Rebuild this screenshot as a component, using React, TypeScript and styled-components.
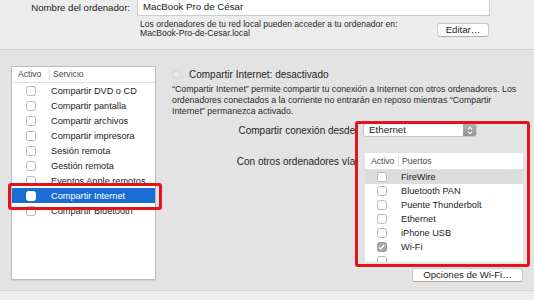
import styled, { createGlobalStyle } from "styled-components";

const GlobalStyle = createGlobalStyle`
  html,
  body {
    margin: 0;
    padding: 0;
    background: #ececec;
  }

  body {
    font-family: "Liberation Sans", Arial, sans-serif;
    color: #1f1f1f;
  }

  * {
    box-sizing: border-box;
  }
`;

const Window = styled.div`
  position: relative;
  width: 534px;
  height: 300px;
  overflow: hidden;
  background: #ececec;
`;

const NameSection = styled.section`
  height: 50px;
  margin-top: -1px;
  display: grid;
  grid-template-columns: 137px 353px;
  grid-template-rows: 17px auto;
  row-gap: 4px;
`;

const NameLabel = styled.div`
  text-align: right;
  padding-right: 7px;
  font-size: 9.6px;
  line-height: 17px;
  color: #222;
`;

const NameField = styled.div`
  height: 17px;
  background: #fff;
  border: 1px solid #cbcbcb;
  border-top: none;
  padding-left: 5px;
  font-size: 9.7px;
  line-height: 16px;
  color: #1a1a1a;
`;

const InfoRow = styled.div`
  grid-column: 2;
  display: flex;
  justify-content: space-between;
  align-items: flex-start;
`;

const InfoText = styled.div`
  padding-left: 3px;
  font-size: 8.6px;
  line-height: 9.3px;
  color: #2a2a2a;
`;

const PushButton = styled.button<{ $width: number }>`
  width: ${(p) => p.$width}px;
  height: 14px;
  padding: 0;
  background: #fff;
  border: 1px solid #c8c8c8;
  border-bottom-color: #adadad;
  border-radius: 3px;
  font-family: inherit;
  font-size: 9.6px;
  line-height: 12px;
  color: #1c1c1c;
`;

const EditButton = styled(PushButton)`
  margin-top: 3px;
  margin-right: 1px;
`;

const ServicesBox = styled.section`
  height: 242px;
  background: #e3e3e3;
  border-top: 1px solid #d6d6d6;
  border-bottom: 1px solid #d6d6d6;
  display: flex;
  padding: 16px 0 0 11px;
`;

const ListBox = styled.div`
  width: 145px;
  height: 214px;
  background: #fff;
  border: 1px solid #bcbcbc;
  box-shadow: 0 1px 1px rgba(0, 0, 0, 0.08);
  overflow: hidden;
`;

const ListHeader = styled.div<{ $first: number; $height: number }>`
  height: ${(p) => p.$height}px;
  display: grid;
  grid-template-columns: ${(p) => p.$first}px 1fr;
  align-items: center;
  border-bottom: 1px solid #e2e2e2;
  font-size: 8.6px;
  color: #4b4b4b;
`;

const HeaderCell = styled.div<{ $divider?: boolean }>`
  padding-left: ${(p) => (p.$divider ? 3 : 6)}px;
  border-left: ${(p) => (p.$divider ? "1px solid #dedede" : "none")};
  line-height: 11px;
`;

const ListRow = styled.div<{ $first: number; $height: number; $tone?: "selected" | "hover" }>`
  height: ${(p) => p.$height}px;
  display: grid;
  grid-template-columns: ${(p) => p.$first}px 1fr;
  align-items: center;
  font-size: 9.2px;
  color: ${(p) => (p.$tone === "selected" ? "#fff" : "#1c1c1c")};
  background: ${(p) =>
    p.$tone === "selected" ? "#1b6dd6" : p.$tone === "hover" ? "#dcdcdc" : "transparent"};
`;

const CheckCell = styled.div`
  display: flex;
  justify-content: center;
`;

const Check = styled.span<{ $checked?: boolean; $onDark?: boolean }>`
  width: 10px;
  height: 10px;
  border-radius: 2.5px;
  display: flex;
  align-items: center;
  justify-content: center;
  background: ${(p) => (p.$checked ? "#a6a6a6" : "#fff")};
  border: 1px solid ${(p) => (p.$checked ? "#999" : p.$onDark ? "#fff" : "#b9b9b9")};
`;

const RowLabel = styled.div<{ $pad: number }>`
  padding-left: ${(p) => p.$pad}px;
  white-space: nowrap;
`;

const RightPanel = styled.div`
  margin-left: 16px;
  width: 351px;
  padding-top: 1px;
`;

const StatusRow = styled.div`
  height: 14px;
  display: flex;
  align-items: center;
  gap: 8px;
  font-size: 10px;
  color: #1e1e1e;
`;

const Radio = styled.span`
  width: 9px;
  height: 9px;
  border-radius: 50%;
  background: #e9e9e9;
  border: 1px solid #d2d2d2;
`;

const Description = styled.p`
  margin: 3px 0 0;
  width: 362px;
  font-size: 8.8px;
  line-height: 11px;
  color: #2a2a2a;
  white-space: nowrap;
`;

const FormRow = styled.div<{ $gap: number }>`
  margin-top: ${(p) => p.$gap}px;
  display: grid;
  grid-template-columns: 191px 160px;
  align-items: start;
`;

const FieldLabel = styled.div<{ $lift?: number }>`
  text-align: right;
  padding-right: 5px;
  padding-top: ${(p) => p.$lift ?? 0}px;
  font-size: 10px;
  line-height: 15px;
  color: #1e1e1e;
  white-space: nowrap;
`;

const Popup = styled.div`
  width: 114px;
  height: 14px;
  display: flex;
  background: #fff;
  border: 1px solid #c6c6c6;
  border-radius: 3px;
  overflow: hidden;
`;

const PopupValue = styled.div`
  flex: 1;
  padding-left: 5px;
  font-size: 9.8px;
  line-height: 12px;
  color: #1c1c1c;
`;

const Stepper = styled.div`
  width: 13px;
  display: flex;
  align-items: center;
  justify-content: center;
  background: linear-gradient(#b1b1b1, #939393);
`;

const PortsTable = styled.div`
  margin-left: 2px;
  width: 158px;
  height: 109px;
  background: #fff;
  overflow: hidden;
`;

const WifiButton = styled(PushButton)`
  grid-column: 2;
  justify-self: end;
`;

const Callout = styled.div<{ $x: number; $y: number; $w: number; $h: number }>`
  position: absolute;
  left: ${(p) => p.$x}px;
  top: ${(p) => p.$y}px;
  width: ${(p) => p.$w}px;
  height: ${(p) => p.$h}px;
  border: 3px solid #e3121b;
  border-radius: 3px;
  pointer-events: none;
`;

const services = [
  "Compartir DVD o CD",
  "Compartir pantalla",
  "Compartir archivos",
  "Compartir impresora",
  "Sesión remota",
  "Gestión remota",
  "Eventos Apple remotos",
  "Compartir Internet",
  "Compartir Bluetooth",
];

// the last entry only peeks in under the bottom edge of the table
const ports = [
  { name: "FireWire", on: false },
  { name: "Bluetooth PAN", on: false },
  { name: "Puente Thunderbolt", on: false },
  { name: "Ethernet", on: false },
  { name: "iPhone USB", on: false },
  { name: "Wi-Fi", on: true },
  { name: "", on: false },
];

function Tick() {
  return (
    <svg width="7" height="6" viewBox="0 0 7 6">
      <path d="M0.8 3.2 L2.7 5 L6.2 0.8" fill="none" stroke="#fff" strokeWidth="1.3" />
    </svg>
  );
}

function Arrows() {
  return (
    <svg width="6" height="9" viewBox="0 0 6 9">
      <path d="M1 3.4 L3 1.4 L5 3.4 M1 5.6 L3 7.6 L5 5.6" fill="none" stroke="#fff" strokeWidth="1.1" />
    </svg>
  );
}

export default function App() {
  return (
    <>
      <GlobalStyle />
      <Window>
        <NameSection>
          <NameLabel>Nombre del ordenador:</NameLabel>
          <NameField>MacBook Pro de César</NameField>
          <InfoRow>
            <InfoText>
              Los ordenadores de tu red local pueden acceder a tu ordenador en:
              <br />
              MacBook-Pro-de-Cesar.local
            </InfoText>
            <EditButton $width={52}>Editar…</EditButton>
          </InfoRow>
        </NameSection>

        <ServicesBox>
          <ListBox>
            <ListHeader $first={37} $height={16}>
              <HeaderCell>Activo</HeaderCell>
              <HeaderCell $divider>Servicio</HeaderCell>
            </ListHeader>
            {services.map((s) => {
              const selected = s === "Compartir Internet";
              return (
                <ListRow key={s} $first={37} $height={15} $tone={selected ? "selected" : undefined}>
                  <CheckCell>
                    <Check $onDark={selected} />
                  </CheckCell>
                  <RowLabel $pad={2}>{s}</RowLabel>
                </ListRow>
              );
            })}
          </ListBox>

          <RightPanel>
            <StatusRow>
              <Radio />
              Compartir Internet: desactivado
            </StatusRow>
            <Description>
              “Compartir Internet” permite compartir tu conexión a Internet con otros ordenadores. Los
              <br />
              ordenadores conectados a la corriente no entrarán en reposo mientras “Compartir
              <br />
              Internet” permanezca activado.
            </Description>

            <FormRow $gap={6}>
              <FieldLabel>Compartir conexión desde:</FieldLabel>
              <Popup>
                <PopupValue>Ethernet</PopupValue>
                <Stepper>
                  <Arrows />
                </Stepper>
              </Popup>
            </FormRow>

            <FormRow $gap={15}>
              <FieldLabel $lift={1}>Con otros ordenadores vía:</FieldLabel>
              <PortsTable>
                <ListHeader $first={33} $height={17}>
                  <HeaderCell>Activo</HeaderCell>
                  <HeaderCell $divider>Puertos</HeaderCell>
                </ListHeader>
                {ports.map((p, i) => (
                  <ListRow key={i} $first={33} $height={14} $tone={i === 0 ? "hover" : undefined}>
                    <CheckCell>
                      <Check $checked={p.on}>{p.on && <Tick />}</Check>
                    </CheckCell>
                    <RowLabel $pad={3}>{p.name}</RowLabel>
                  </ListRow>
                ))}
              </PortsTable>
            </FormRow>

            <FormRow $gap={6}>
              <WifiButton $width={111}>Opciones de Wi-Fi…</WifiButton>
            </FormRow>
          </RightPanel>
        </ServicesBox>

        <Callout $x={8} $y={183} $w={154} $h={27} />
        <Callout $x={355} $y={121} $w={175} $h={146} />
      </Window>
    </>
  );
}
